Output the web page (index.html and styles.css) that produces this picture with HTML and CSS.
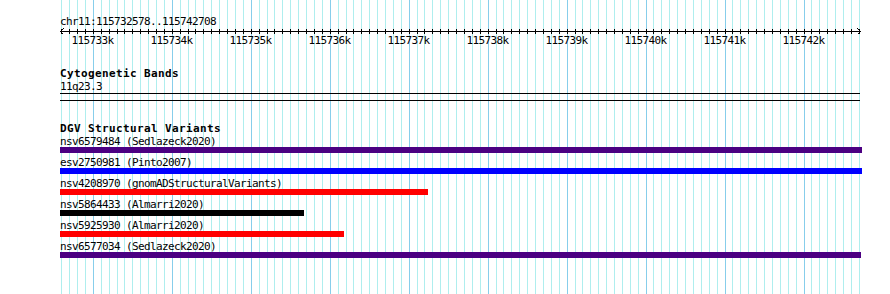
FILE: index.html
```html
<!doctype html>
<html>
<head>
<meta charset="utf-8">
<title>chr11:115732578..115742708</title>
<link rel="stylesheet" href="styles.css">
</head>
<body>
<div class="panel">
	<svg class="grid" id="grid" width="890" height="294"></svg>
	<div class="content">
		<div class="ruler">
			<div class="ruler-title">chr11:115732578..115742708</div>
			<svg class="axis" id="axis" width="890" height="19"></svg>
		</div>

		<div class="track cyto">
			<div class="track-title">Cytogenetic Bands</div>
			<div class="band-label">11q23.3</div>
			<div class="band"></div>
		</div>

		<div class="track dgv">
			<div class="track-title">DGV Structural Variants</div>
			<div class="feature">
				<div class="feature-label">nsv6579484 (Sedlazeck2020)</div>
				<div class="bar indigo" style="width: 802px"></div>
			</div>
			<div class="feature">
				<div class="feature-label">esv2750981 (Pinto2007)</div>
				<div class="bar blue" style="width: 802px"></div>
			</div>
			<div class="feature">
				<div class="feature-label">nsv4208970 (gnomADStructuralVariants)</div>
				<div class="bar red" style="width: 368px"></div>
			</div>
			<div class="feature">
				<div class="feature-label">nsv5864433 (Almarri2020)</div>
				<div class="bar black" style="width: 244px"></div>
			</div>
			<div class="feature">
				<div class="feature-label">nsv5925930 (Almarri2020)</div>
				<div class="bar red" style="width: 284px"></div>
			</div>
			<div class="feature">
				<div class="feature-label">nsv6577034 (Sedlazeck2020)</div>
				<div class="bar indigo" style="width: 801px"></div>
			</div>
		</div>
	</div>
</div>

<script>

var start = 115732578;
var end = 115742708;
var left = 60;
var span = 800;
var svgNS = "http://www.w3.org/2000/svg";

function xpos(p)
{
	return Math.floor(left + (p - start) * span / (end - start + 1));
}

function addLine(svg, x1, y1, x2, y2, cls) {
    var line = document.createElementNS(svgNS, "line");
    line.setAttribute("x1", x1);
    line.setAttribute("y1", y1);
    line.setAttribute("x2", x2);
    line.setAttribute("y2", y2);
    line.setAttribute("class", cls);
    svg.appendChild(line);
}

function drawRuler() {
    var grid = document.getElementById("grid");
    var axis = document.getElementById("axis");

    // grid + ticks every 100bp, label every 1kb
    for (var p = Math.ceil(start / 100) * 100; p <= end; p += 100) {
        var x = xpos(p) + 0.5;
        var major = (p % 1000 === 0);
        addLine(grid, x, 0, x, 294, major ? "grid-major" : "grid-minor");
        addLine(axis, x, 1, x, 6, "tick");

        if (major) {
            var label = document.createElementNS(svgNS, "text");
            label.setAttribute("x", x - 1);
            label.setAttribute("y", 16);
            label.setAttribute("class", "tick-label");
            label.textContent = (p / 1000) + "k";
            axis.appendChild(label);
        }
    }

    addLine(axis, left, 3.5, left + span + 1, 3.5, "axis-line");

    // arrows at both ends
    var arrows = document.createElementNS(svgNS, "path");
    arrows.setAttribute("d", "M63.5 0.5 L60.5 3.5 L63.5 6.5 M857.5 0.5 L860.5 3.5 L857.5 6.5");
    arrows.setAttribute("class", "arrow");
    axis.appendChild(arrows);
}

drawRuler();

</script>
</body>
</html>
```

FILE: styles.css
```css
body {
	margin: 0;
	background: #fff;
	color: #000;
	font-family: "DejaVu Sans Mono", "Liberation Mono", monospace;
	font-size: 11px;
	letter-spacing: -0.62px;
}

.panel {
	display: grid;
	width: 890px;
	height: 294px;
	overflow: hidden;
}

.grid, .content {
	grid-area: 1 / 1;
}

svg {
	display: block;
	shape-rendering: crispEdges;
}

.grid-minor {
	stroke: #afeeee;
}

.grid-major {
	stroke: #87ceeb;
}

.tick, .axis-line, .arrow {
	stroke: #000;
	stroke-width: 1;
	fill: none;
}

.tick-label {
	font-family: "DejaVu Sans Mono", "Liberation Mono", monospace;
	font-size: 11px;
	letter-spacing: -0.62px;
	text-anchor: middle;
	fill: #000;
}

.ruler-title {
	padding: 15px 0 0 60px;
	line-height: 13px;
}

.track {
	padding-left: 60px;
}

.cyto {
	margin-top: 20px;
}

.dgv {
	margin-top: 21px;
}

.track-title {
	font-weight: bold;
	letter-spacing: 0.38px;
	line-height: 13px;
}

.band-label {
	line-height: 13px;
}

.band {
	width: 800px;
	height: 6px;
	border-top: 1px solid #000;
	border-bottom: 1px solid #000;
}

.feature {
	margin-bottom: 3px;
}

.feature-label {
	height: 12px;
	line-height: 13px;
	white-space: nowrap;
}

.bar {
	height: 6px;
}

.indigo {
	background: #4b0082;
}

.blue {
	background: #0000ff;
}

.red {
	background: #ff0000;
}

.black {
	background: #000;
}
```
